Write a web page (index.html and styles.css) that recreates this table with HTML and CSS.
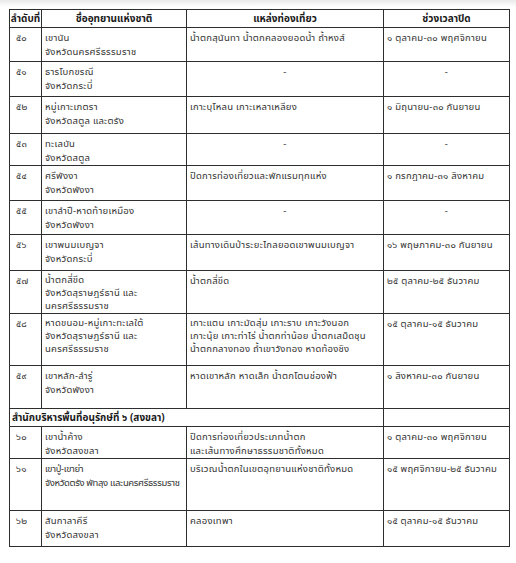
FILE: index.html
```html
<!DOCTYPE html>
<html lang="th">
<head>
<meta charset="utf-8">
<link rel="stylesheet" href="styles.css">
</head>
<body>
<div class="sheet">
<table class="tbl">
  <colgroup>
    <col class="c-no"><col class="c-name"><col class="c-place"><col class="c-date">
  </colgroup>
  <thead>
    <tr class="head">
      <th>ลำดับที่</th>
      <th>ชื่ออุทยานแห่งชาติ</th>
      <th>แหล่งท่องเที่ยว</th>
      <th>ช่วงเวลาปิด</th>
    </tr>
  </thead>
  <tbody>
    <tr class="r34">
      <td class="no">๕๐</td>
      <td>เขานัน<br>จังหวัดนครศรีธรรมราช</td>
      <td>น้ำตกสุนันทา น้ำตกคลองยอดน้ำ ถ้ำหงส์</td>
      <td>๑ ตุลาคม-๓๐ พฤศจิกายน</td>
    </tr>
    <tr class="r35">
      <td class="no">๕๑</td>
      <td>ธารโบกขรณี<br>จังหวัดกระบี่</td>
      <td class="dash">-</td>
      <td class="dash">-</td>
    </tr>
    <tr class="r37">
      <td class="no">๕๒</td>
      <td>หมู่เกาะเภตรา<br>จังหวัดสตูล และตรัง</td>
      <td>เกาะบุโหลน เกาะเหลาเหลียง</td>
      <td>๑ มิถุนายน-๓๐ กันยายน</td>
    </tr>
    <tr class="r32">
      <td class="no">๕๓</td>
      <td>ทะเลบัน<br>จังหวัดสตูล</td>
      <td class="dash">-</td>
      <td class="dash">-</td>
    </tr>
    <tr class="r35">
      <td class="no">๕๔</td>
      <td>ศรีพังงา<br>จังหวัดพังงา</td>
      <td>ปิดการท่องเที่ยวและพักแรมทุกแห่ง</td>
      <td>๑ กรกฎาคม-๓๑ สิงหาคม</td>
    </tr>
    <tr class="r34">
      <td class="no">๕๕</td>
      <td>เขาลำปี-หาดท้ายเหมือง<br>จังหวัดพังงา</td>
      <td class="dash">-</td>
      <td class="dash">-</td>
    </tr>
    <tr class="r36">
      <td class="no">๕๖</td>
      <td>เขาพนมเบญจา<br>จังหวัดกระบี่</td>
      <td>เส้นทางเดินป่าระยะไกลยอดเขาพนมเบญจา</td>
      <td>๑๖ พฤษภาคม-๓๐ กันยายน</td>
    </tr>
    <tr class="r43">
      <td class="no">๕๗</td>
      <td class="tight">น้ำตกสี่ขีด<br>จังหวัดสุราษฎร์ธานี และ<br>นครศรีธรรมราช</td>
      <td>น้ำตกสี่ขีด</td>
      <td>๒๕ ตุลาคม-๒๕ ธันวาคม</td>
    </tr>
    <tr class="r52">
      <td class="no">๕๘</td>
      <td class="tight">หาดขนอม-หมู่เกาะทะเลใต้<br>จังหวัดสุราษฎร์ธานี และ<br>นครศรีธรรมราช</td>
      <td class="tight">เกาะแตน เกาะมัดสุ่ม เกาะราบ เกาะวังนอก<br>เกาะนุ้ย เกาะท่าไร่ น้ำตกท่าน้อย น้ำตกเสม็ดชุน<br>น้ำตกกลางทอง ถ้ำเขาวังทอง หาดท้องชิง</td>
      <td>๑๕ ตุลาคม-๑๕ ธันวาคม</td>
    </tr>
    <tr class="r43">
      <td class="no">๕๙</td>
      <td>เขาหลัก-ลำรู่<br>จังหวัดพังงา</td>
      <td>หาดเขาหลัก หาดเล็ก น้ำตกโตนช่องฟ้า</td>
      <td>๑ สิงหาคม-๓๐ กันยายน</td>
    </tr>
    <tr class="section">
      <td colspan="3">สำนักบริหารพื้นที่อนุรักษ์ที่ ๖ (สงขลา)</td>
      <td></td>
    </tr>
    <tr class="r32">
      <td class="no">๖๐</td>
      <td>เขาน้ำค้าง<br>จังหวัดสงขลา</td>
      <td>ปิดการท่องเที่ยวประเภทน้ำตก<br>และเส้นทางศึกษาธรรมชาติทั้งหมด</td>
      <td>๑ ตุลาคม-๓๐ พฤศจิกายน</td>
    </tr>
    <tr class="r52">
      <td class="no">๖๑</td>
      <td class="narrow">เขาปู่-เขาย่า<br>จังหวัดตรัง พัทลุง และนครศรีธรรมราช</td>
      <td>บริเวณน้ำตกในเขตอุทยานแห่งชาติทั้งหมด</td>
      <td>๑๕ พฤศจิกายน-๒๕ ธันวาคม</td>
    </tr>
    <tr class="r36">
      <td class="no">๖๒</td>
      <td>สันกาลาคีรี<br>จังหวัดสงขลา</td>
      <td>คลองเทพา</td>
      <td>๑๕ ตุลาคม-๑๕ ธันวาคม</td>
    </tr>
  </tbody>
</table>
</div>
</body>
</html>
```
FILE: styles.css
```css
html, body {
  margin: 0;
  padding: 0;
  background: #ffffff;
}
body {
  font-family: "Noto Sans Thai", "Noto Sans", "DejaVu Sans", sans-serif;
  color: #333333;
  font-size: 9.5px;
  letter-spacing: 0.25px;
}
.sheet {
  padding: 9px 0 0 9px;
  background: linear-gradient(#e9e9e9 0, #ffffff 7px);
}
.tbl {
  border-collapse: collapse;
  table-layout: fixed;
  width: 500px;
  background: #ffffff;
}
.c-no { width: 32px; }
.c-name { width: 145px; }
.c-place { width: 197px; }
.c-date { width: 126px; }
.tbl th, .tbl td {
  border: 1px solid #2e2e2e;
  padding: 3px 3px 0 3px;
  line-height: 14px;
  vertical-align: top;
  text-align: left;
  white-space: nowrap;
}
.tbl td.tight {
  line-height: 13px;
}
.tbl td.narrow {
  letter-spacing: -0.35px;
}
.tbl th {
  font-weight: bold;
  font-size: 10px;
  letter-spacing: 0;
  text-align: center;
  vertical-align: middle;
  padding: 0;
  height: 17px;
  color: #1a1a1a;
}
.tbl td.no {
  padding-left: 6px;
}
.tbl td.dash {
  text-align: center;
}
.r32 { height: 32px; }
.r34 { height: 34px; }
.r35 { height: 35px; }
.r36 { height: 36px; }
.r37 { height: 37px; }
.r43 { height: 43px; }
.r52 { height: 52px; }
.section td {
  font-weight: bold;
  font-size: 10px;
  letter-spacing: 0;
  height: 17px;
  padding: 0 2px;
  vertical-align: middle;
  color: #1a1a1a;
}
```
